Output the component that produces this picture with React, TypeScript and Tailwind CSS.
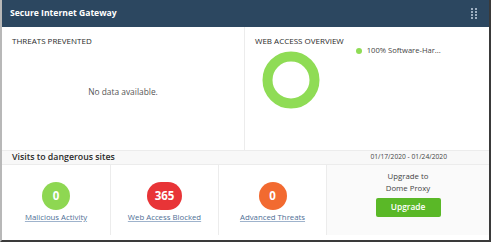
import React from "react";

const font = { fontFamily: '"Open Sans", "Noto Sans", sans-serif' };

function Stat({ value, color, label, wide }: { value: string; color: string; label: string; wide?: boolean }) {
  return (
    <div className="flex flex-col items-center pt-[17px]">
      <div
        className={`flex h-[28px] items-center justify-center rounded-full text-[11.5px] font-bold text-white ${wide ? "w-[35px]" : "w-[28px]"} ${color}`}
      >
        {value}
      </div>
      <div className="mt-[1px] whitespace-nowrap text-[7.8px] leading-[12px] text-[#4f6f96] underline decoration-[#9fb3cc]">
        {label}
      </div>
    </div>
  );
}

export default function App() {
  return (
    <div className="bg-white w-[493px] h-[246px]" style={font}>
      <div className="flex h-[242px] w-[491px] flex-col border-b-2 border-l-2 border-r-2 border-b-[#3a3a3a] border-l-[#b8b8b8] border-r-[#3a3a3a] bg-white">
        <div className="flex h-[27px] shrink-0 items-center justify-between bg-[#2c4760] pl-[8px] pr-[12px]">
          <span className="whitespace-nowrap text-[8.6px] font-bold text-white">Secure Internet Gateway</span>
          <div className="grid grid-cols-2 gap-x-[2px] gap-y-[1px]">
            {Array.from({ length: 8 }).map((_, i) => (
              <div key={i} className="h-[2px] w-[2px] bg-[#9fb0c2]" />
            ))}
          </div>
        </div>
        <div className="flex h-[123px] shrink-0">
          <div className="flex w-[243px] flex-col border-r border-[#ececec] px-[10px] pt-[8px]">
            <div className="whitespace-nowrap text-[8px] leading-[12px] text-[#2a2a2a]">THREATS PREVENTED</div>
            <div className="mt-[39px] text-center text-[8.4px] text-[#555]">No data available.</div>
          </div>
          <div className="flex flex-1 px-[10px] pt-[8px]">
            <div className="flex flex-col">
              <div className="whitespace-nowrap text-[8px] leading-[12px] text-[#2a2a2a]">WEB ACCESS OVERVIEW</div>
              <svg width="58" height="58" viewBox="0 0 58 58" className="ml-[7px] mt-[4px]">
                <circle cx="29" cy="29" r="23.5" fill="none" stroke="#8fdc55" strokeWidth="10" />
              </svg>
            </div>
            <div className="ml-[12px] mt-[10px] flex h-[12px] items-center gap-[5px]">
              <div className="h-[6px] w-[6px] rounded-full bg-[#8fdc55]" />
              <span className="whitespace-nowrap text-[7.6px] text-[#444]">100% Software-Har...</span>
            </div>
          </div>
        </div>
        <div className="flex h-[15px] shrink-0 items-center justify-between border-y border-[#ececec] bg-[#f8f8f8] pl-[10px] pr-[42px]">
          <span className="whitespace-nowrap text-[8.8px] font-semibold text-[#2a2a2a]">Visits to dangerous sites</span>
          <span className="whitespace-nowrap text-[6.7px] text-[#444]">01/17/2020 - 01/24/2020</span>
        </div>
        <div className="flex h-[70px] shrink-0">
          <div className="w-[109px] border-r border-[#ececec]">
            <Stat value="0" color="bg-[#8ed752]" label="Malicious Activity" />
          </div>
          <div className="w-[108px] border-r border-[#ececec]">
            <Stat value="365" color="bg-[#e83437]" label="Web Access Blocked" wide />
          </div>
          <div className="w-[108px] border-r border-[#ececec]">
            <Stat value="0" color="bg-[#f26a30]" label="Advanced Threats" />
          </div>
          <div className="flex flex-1 flex-col items-center bg-[#fafafa] pt-[5px]">
            <div className="text-center text-[7.8px] leading-[12px] text-[#444]">
              Upgrade to
              <br />
              Dome Proxy
            </div>
            <div className="mt-[4px] flex h-[19px] w-[65px] items-center justify-center rounded-[2px] bg-[#5ab827] text-[8.4px] font-semibold text-white">
              Upgrade
            </div>
          </div>
        </div>
      </div>
    </div>
  );
}
